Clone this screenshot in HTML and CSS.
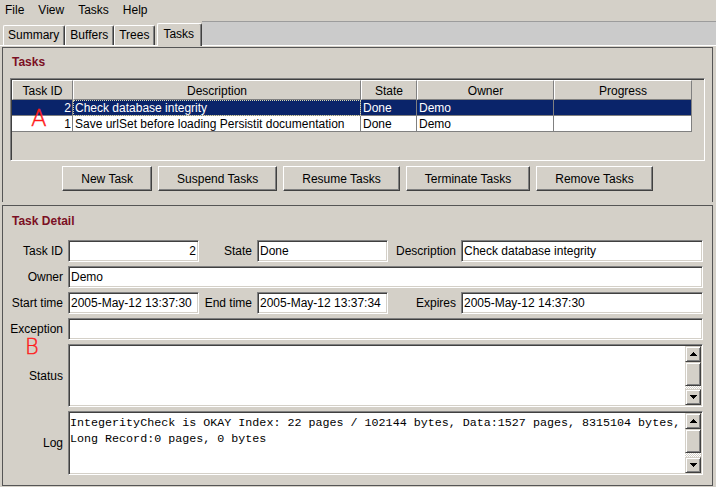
FILE: index.html
```html
<!DOCTYPE html>
<html>
<head>
<meta charset="utf-8">
<title>Tasks</title>
<link rel="stylesheet" href="styles.css">
</head>
<body>
<div class="app">
  <nav class="menubar"><span>File</span><span>View</span><span>Tasks</span><span>Help</span></nav>
  <div class="tabstrip">
    <div class="tab">Summary</div>
    <div class="tab">Buffers</div>
    <div class="tab">Trees</div>
    <div class="tab sel">Tasks</div>
    <div class="tabfill"></div>
  </div>
  <div class="content">
    <section class="panel tasks">
      <h2 class="ptitle">Tasks</h2>
      <div class="scroll">
        <div class="tgrid thead">
          <div class="th">Task ID</div>
          <div class="th">Description</div>
          <div class="th">State</div>
          <div class="th">Owner</div>
          <div class="th">Progress</div>
        </div>
        <div class="tgrid trow selected">
          <div class="td num">2</div>
          <div class="td focus">Check database integrity</div>
          <div class="td">Done</div>
          <div class="td">Demo</div>
          <div class="td"></div>
        </div>
        <div class="tgrid trow">
          <div class="td num">1</div>
          <div class="td">Save urlSet before loading Persistit documentation</div>
          <div class="td">Done</div>
          <div class="td">Demo</div>
          <div class="td"></div>
        </div>
      </div>
      <div class="buttons">
        <button class="btn">New Task</button>
        <button class="btn">Suspend Tasks</button>
        <button class="btn">Resume Tasks</button>
        <button class="btn">Terminate Tasks</button>
        <button class="btn">Remove Tasks</button>
      </div>
    </section>
    <section class="panel detail">
      <h2 class="ptitle">Task Detail</h2>
      <div class="form">
        <label class="lbl">Task ID</label>
        <div class="field right">2</div>
        <label class="lbl">State</label>
        <div class="field">Done</div>
        <label class="lbl">Description</label>
        <div class="field">Check database integrity</div>

        <label class="lbl">Owner</label>
        <div class="field wide">Demo</div>

        <label class="lbl">Start time</label>
        <div class="field">2005-May-12 13:37:30</div>
        <label class="lbl">End time</label>
        <div class="field">2005-May-12 13:37:34</div>
        <label class="lbl">Expires</label>
        <div class="field">2005-May-12 14:37:30</div>

        <label class="lbl">Exception</label>
        <div class="field wide"></div>

        <label class="lbl">Status</label>
        <div class="field wide area">
          <div class="area-text"></div>
          <div class="vscroll">
            <div class="sbtn"><svg width="7" height="4" viewBox="0 0 7 4" shape-rendering="crispEdges"><path d="M3 0h1v1h-1zM2 1h3v1h-3zM1 2h5v1h-5zM0 3h7v1h-7z" fill="#000"/></svg></div>
            <div class="sthumb"></div>
            <div class="strack"></div>
            <div class="sbtn"><svg width="7" height="4" viewBox="0 0 7 4" shape-rendering="crispEdges"><path d="M0 0h7v1h-7zM1 1h5v1h-5zM2 2h3v1h-3zM3 3h1v1h-1z" fill="#000"/></svg></div>
          </div>
        </div>

        <label class="lbl">Log</label>
        <div class="field wide area">
          <div class="area-text mono">IntegerityCheck is OKAY Index: 22 pages / 102144 bytes, Data:1527 pages, 8315104 bytes,
Long Record:0 pages, 0 bytes</div>
          <div class="vscroll">
            <div class="sbtn"><svg width="7" height="4" viewBox="0 0 7 4" shape-rendering="crispEdges"><path d="M3 0h1v1h-1zM2 1h3v1h-3zM1 2h5v1h-5zM0 3h7v1h-7z" fill="#000"/></svg></div>
            <div class="sthumb"></div>
            <div class="strack"></div>
            <div class="sbtn"><svg width="7" height="4" viewBox="0 0 7 4" shape-rendering="crispEdges"><path d="M0 0h7v1h-7zM1 1h5v1h-5zM2 2h3v1h-3zM3 3h1v1h-1z" fill="#000"/></svg></div>
          </div>
        </div>
      </div>
    </section>
  </div>
  <span class="mark mark-a">A</span>
  <span class="mark mark-b">B</span>
</div>
</body>
</html>
```

FILE: styles.css
```css
* { box-sizing: border-box; }
html, body { margin: 0; padding: 0; }
body {
  background: #d4d0c8;
  font: 12px "Liberation Sans", Arial, sans-serif;
  color: #000;
  width: 716px;
  height: 487px;
  overflow: hidden;
}
.app { position: relative; height: 487px; }

/* menu */
.menubar {
  display: flex;
  gap: 14px;
  height: 21px;
  line-height: 21px;
  padding-left: 5px;
}

/* tabs */
.tabstrip {
  display: flex;
  align-items: flex-end;
  height: 24px;
  padding-left: 3px;
}
.tab {
  height: 20px;
  line-height: 18px;
  padding: 0 5px 0 4px;
  background: #d4d0c8;
  border-top: 1px solid #fff;
  border-left: 1px solid #fff;
  border-right: 1px solid #404040;
  box-shadow: inset -1px 0 #808080;
  border-radius: 2px 2px 0 0;
  white-space: nowrap;
}
.tab.sel {
  position: relative;
  z-index: 1;
  height: 23px;
  line-height: 20px;
  margin-left: 2px;
  margin-bottom: -1px;
  padding: 0 7px 0 5px;
}
.tabfill {
  flex: 1;
  align-self: stretch;
  background: #cbcbcb;
  border-top: 1px solid #9c9c9c;
}

/* content */
.content {
  border-top: 1px solid #fff;
  padding: 1px 3px 0 2px;
}
.panel {
  border: 1px solid #555;
}
.panel.tasks {
  height: 155px;
  border-bottom: 0;
  padding: 7px 7px 0;
}
.panel.detail {
  height: 281px;
  margin-top: 3px;
  padding: 8px 9px 0 7px;
}
.ptitle {
  margin: 0;
  padding-left: 2px;
  font-size: 12px;
  line-height: 14px;
  font-weight: bold;
  color: #7b0f24;
}

/* table */
.scroll {
  margin-top: 9px;
  height: 83px;
  border: 1px solid;
  border-color: #808080 #fff #fff #808080;
  box-shadow: inset 1px 1px #404040, inset -1px -1px #d4d0c8;
  padding: 1px;
  background: #d4d0c8;
}
.tgrid {
  display: grid;
  grid-template-columns: 61px 288px 56px 137px 138px;
  width: 680px;
}
.th {
  height: 20px;
  line-height: 18px;
  padding-top: 1px;
  text-align: center;
  border-top: 1px solid #fff;
  border-left: 1px solid #fff;
  border-right: 1px solid #808080;
  border-bottom: 1px solid #808080;
  white-space: nowrap;
}
.trow { background: #fff; }
.td {
  height: 16px;
  line-height: 16px;
  padding: 0 1px 0 2px;
  border-right: 1px solid #808080;
  border-bottom: 1px solid #808080;
  white-space: nowrap;
  overflow: hidden;
}
.td.num { text-align: right; padding-right: 1px; }
.trow.selected { background: #0a246a; color: #fff; }
.td.focus { outline: 1px dotted #d8d8b0; outline-offset: -1px; }

/* buttons */
.buttons {
  display: flex;
  justify-content: center;
  gap: 6px;
  margin-top: 5px;
}
.btn {
  height: 25px;
  padding: 0 18px;
  font: inherit;
  color: #000;
  background: #d4d0c8;
  border: 1px solid;
  border-color: #fff #404040 #404040 #fff;
  box-shadow: inset -1px -1px #808080;
  white-space: nowrap;
}

/* form */
.form {
  margin-top: 12px;
  display: grid;
  grid-template-columns: 53px 131px 48px 131px 63px 1fr;
  grid-template-rows: 22px 22px 22px 22px 63px 64px;
  column-gap: 5px;
  row-gap: 4px;
}
.lbl {
  display: flex;
  align-items: center;
  justify-content: flex-end;
  white-space: nowrap;
}
.field {
  background: #fff;
  border: 1px solid;
  border-color: #808080 #fff #fff #808080;
  box-shadow: inset 1px 1px #404040, inset -1px -1px #d4d0c8;
  padding: 1px 2px;
  line-height: 18px;
  white-space: nowrap;
  overflow: hidden;
}
.field.right { text-align: right; }
.field.wide { grid-column: 2 / -1; }
.field.area {
  display: flex;
  padding: 1px;
}
.area-text {
  flex: 1;
  padding: 2px 0 0 0;
  white-space: pre;
  overflow: hidden;
}
.mono {
  font-family: "Liberation Mono", "Courier New", monospace;
  font-size: 11.7px;
  line-height: 16px;
}
.vscroll {
  width: 16px;
  display: flex;
  flex-direction: column;
}
.sbtn, .sthumb {
  background: #d4d0c8;
  border: 1px solid;
  border-color: #d4d0c8 #404040 #404040 #d4d0c8;
  box-shadow: inset 1px 1px #fff, inset -1px -1px #808080;
}
.sbtn {
  height: 16px;
  display: flex;
  align-items: center;
  justify-content: center;
}
.sthumb { height: 24px; }
.strack {
  flex: 1;
  background: repeating-conic-gradient(#fff 0 25%, #d4d0c8 0 50%) 0 0 / 2px 2px;
}

/* annotations */
.mark {
  position: absolute;
  font-family: "DejaVu Sans", sans-serif;
  font-weight: 200;
  color: #ff1a1a;
  -webkit-text-stroke: 0.4px #ff1a1a;
  line-height: 1;
}
.mark-a { left: 31px; top: 107px; font-size: 23px; }
.mark-b { left: 25px; top: 337px; font-size: 21px; }
```
